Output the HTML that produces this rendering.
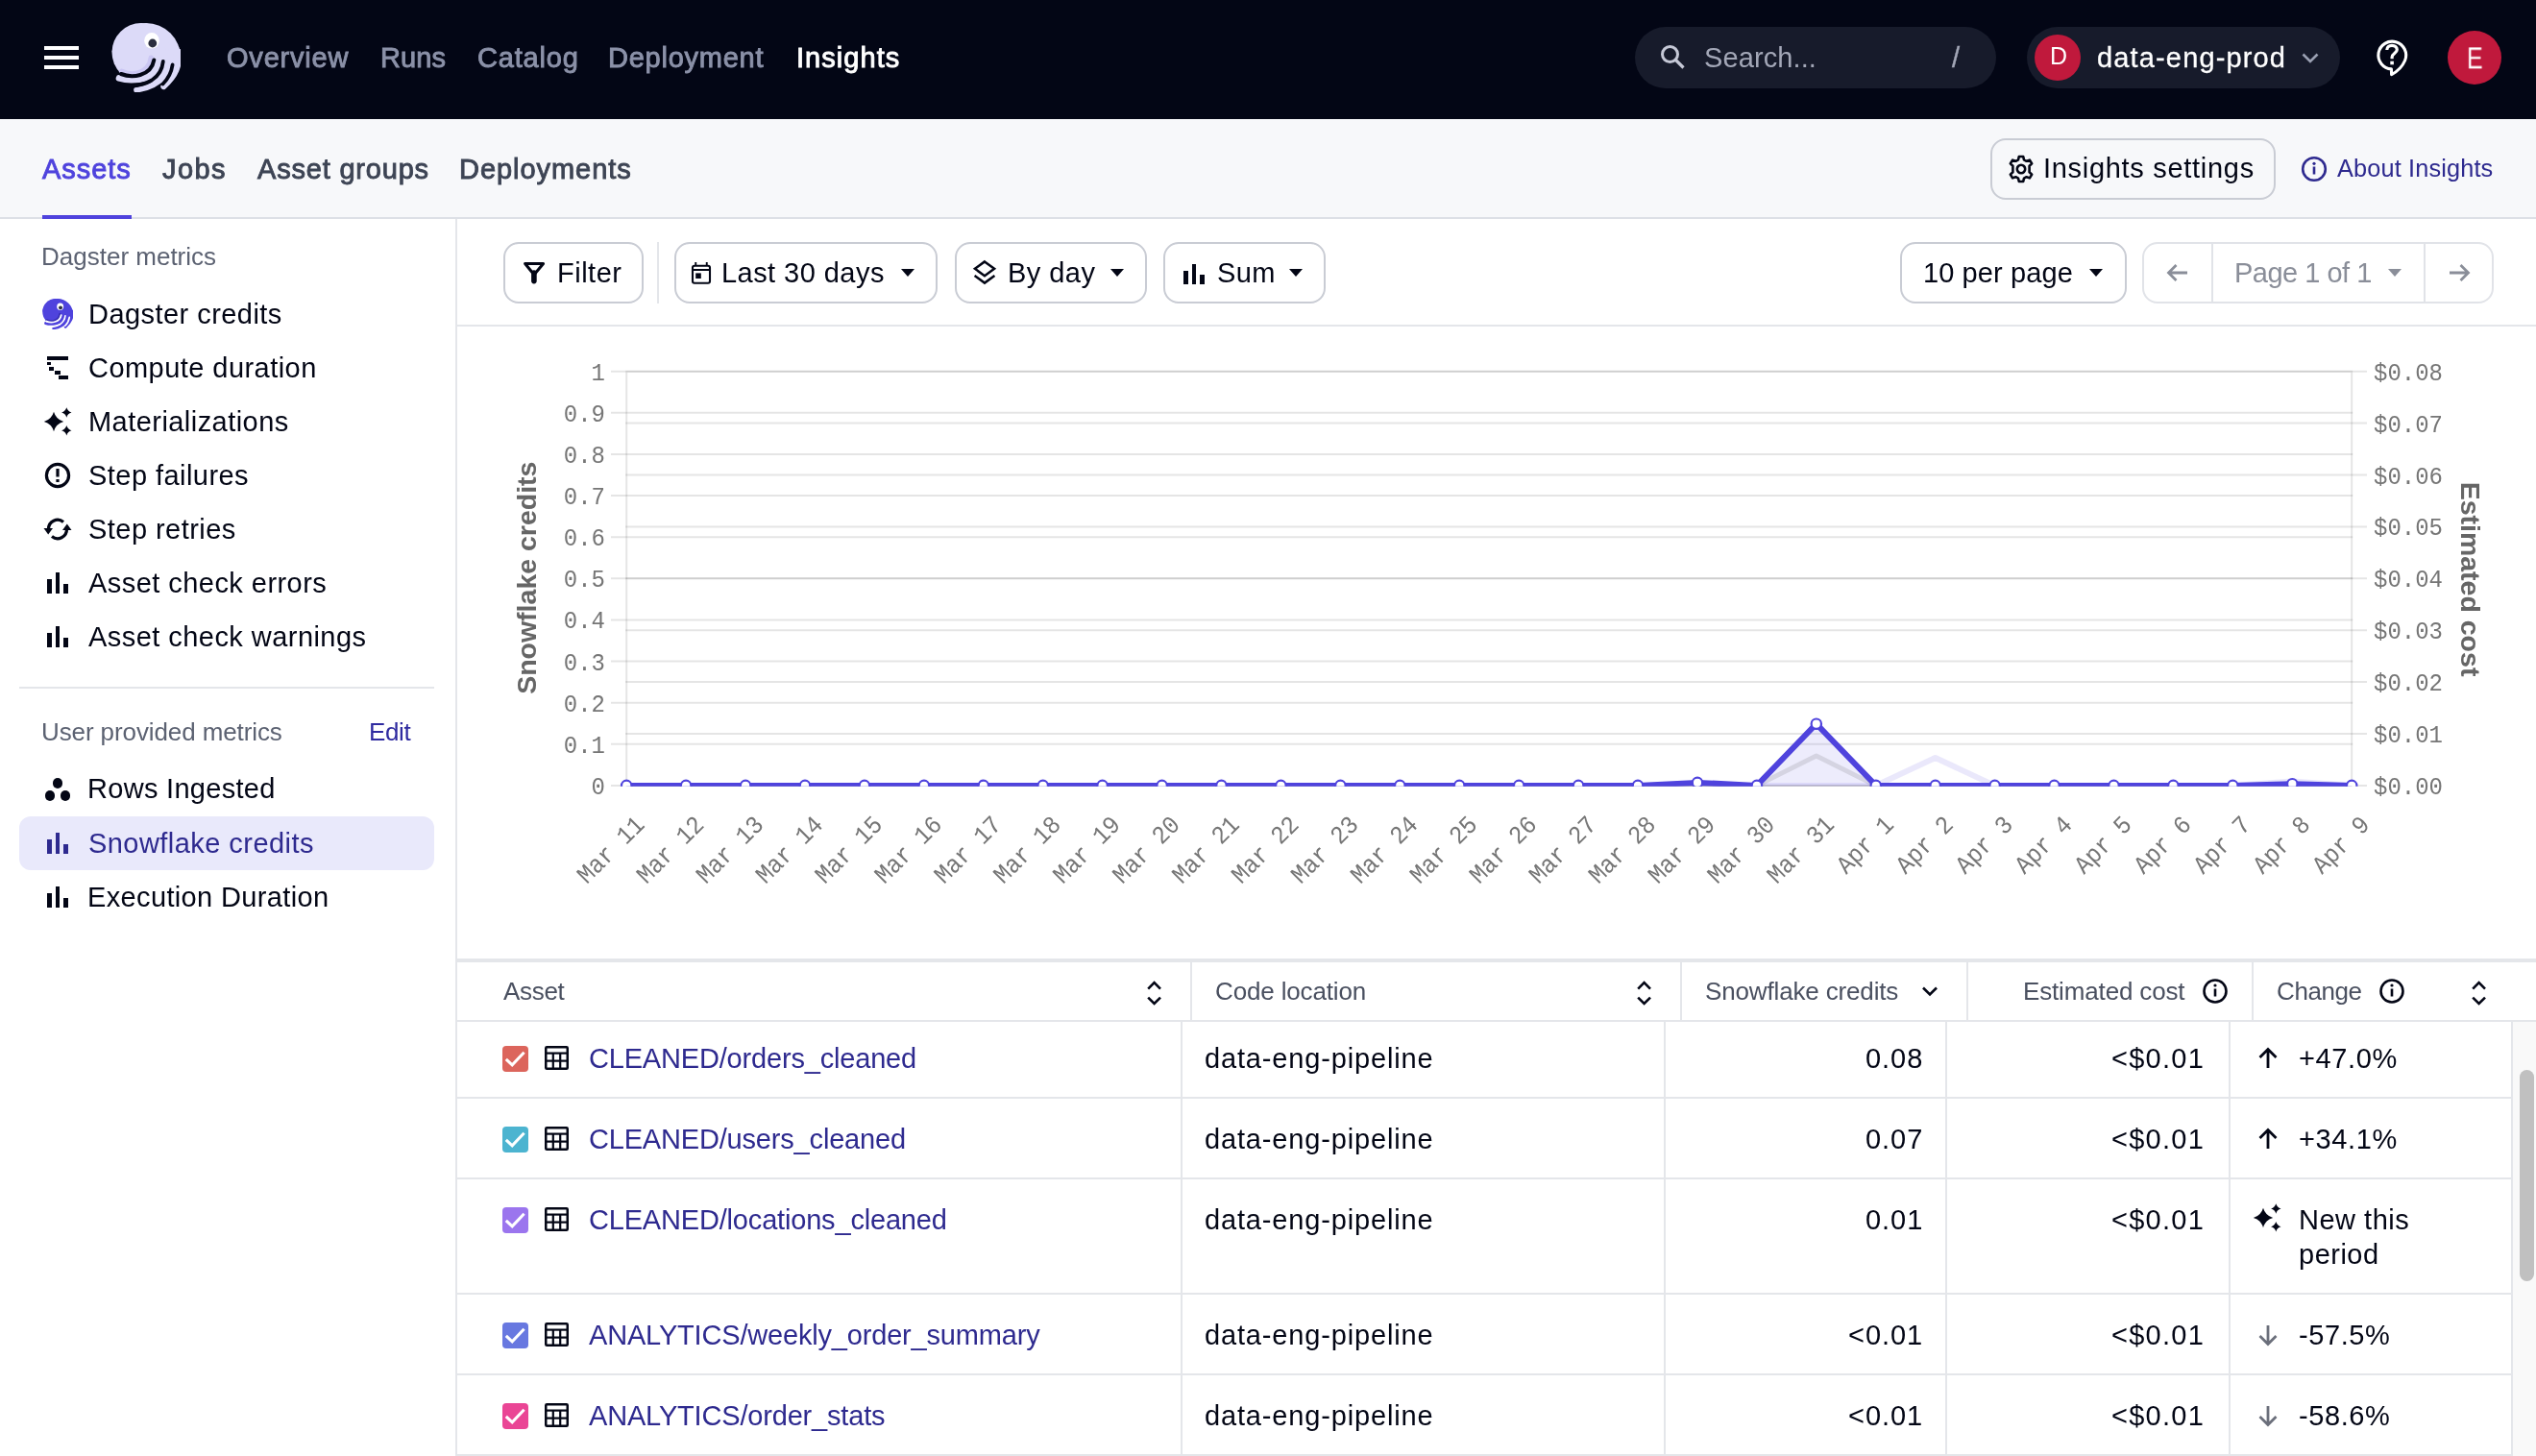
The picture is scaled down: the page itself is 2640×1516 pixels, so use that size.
<!DOCTYPE html>
<html><head><meta charset="utf-8"><title>Insights</title>
<style>
html,body{margin:0;padding:0;width:2640px;height:1516px;overflow:hidden;background:#ffffff;}
body{position:relative;font-family:'Liberation Sans', sans-serif;}
.t{position:absolute;line-height:1;white-space:nowrap;will-change:transform;}
.g{will-change:transform;}
.r{position:absolute;}
</style></head><body>
<div class="r" style="left:0px;top:0px;width:2640px;height:124px;background:#030615;"></div>
<div class="r" style="left:46px;top:48px;width:36px;height:4px;background:#ffffff;"></div>
<div class="r" style="left:46px;top:58px;width:36px;height:4px;background:#ffffff;"></div>
<div class="r" style="left:46px;top:68px;width:36px;height:4px;background:#ffffff;"></div>
<svg class="r" style="left:116px;top:24px" width="72" height="72" viewBox="0 0 72 72"><defs><clipPath id="clipA"><rect x="0" y="0" width="72" height="30"/></clipPath></defs>
<g fill="#dcdaf8">
<circle cx="36" cy="36" r="36" clip-path="url(#clipA)"/>
<circle cx="31" cy="30.5" r="30.5"/>
<path d="M 40 24 L 69.8 24 L 71.5 30 L 72 36 L 71.2 44 L 68.5 50 L 64 56 L 58 61 L 50 62.5 L 44 64 L 40 60 Z"/>
</g>
<g fill="none" stroke-linecap="round">
<path d="M 7.9 57.4 C 16 60 28 59.5 37.8 56.8 C 45 54 50 48 52 40 L 53 28" stroke="#dcdaf8" stroke-width="6.5"/>
<path d="M 26.1 69.6 C 36 68 47 64 53 57 C 58 51 60 46 61 40 L 62 30" stroke="#dcdaf8" stroke-width="5.9"/>
<path d="M 54.3 66.2 C 60 61 65 55 67.5 49 C 70 43 71 38 71 30" stroke="#dcdaf8" stroke-width="5.9"/>
<path d="M 41.2 36 C 40.3 44 35 49.8 27 52 C 21 53.6 15.5 52.6 10.5 50.2" stroke="#cbc7f3" stroke-width="5.2"/>
<path d="M 44.3 38.5 C 43 46 38 51.6 30 54 C 24 55.8 16 55.5 10 53" stroke="#030615" stroke-width="4.1"/>
<path d="M 53.8 40 C 53 48 49 55 42 59.5 C 36 63 29 65 22 65.5" stroke="#030615" stroke-width="3.8"/>
<path d="M 63.6 43.5 C 62.5 51 59.5 57.5 53.5 63.5" stroke="#030615" stroke-width="3.8"/>
</g>
<ellipse cx="42" cy="18.3" rx="7.8" ry="8.3" fill="#ffffff"/>
<circle cx="42.8" cy="21" r="4.4" fill="#2b2e3f"/>
</svg>
<div class="t" style="left:236.0px;top:45.7px;font-size:29px;color:#8b91a8;letter-spacing:0.8px;font-family:'Liberation Sans', sans-serif;font-weight:400;-webkit-text-stroke:0.9px #8b91a8;">Overview</div>
<div class="t" style="left:395.5px;top:45.7px;font-size:29px;color:#8b91a8;letter-spacing:0.1px;font-family:'Liberation Sans', sans-serif;font-weight:400;-webkit-text-stroke:0.9px #8b91a8;">Runs</div>
<div class="t" style="left:497.0px;top:45.7px;font-size:29px;color:#8b91a8;letter-spacing:0.8px;font-family:'Liberation Sans', sans-serif;font-weight:400;-webkit-text-stroke:0.9px #8b91a8;">Catalog</div>
<div class="t" style="left:633.0px;top:45.7px;font-size:29px;color:#8b91a8;letter-spacing:0.75px;font-family:'Liberation Sans', sans-serif;font-weight:400;-webkit-text-stroke:0.9px #8b91a8;">Deployment</div>
<div class="t" style="left:828.5px;top:45.7px;font-size:29px;color:#ffffff;letter-spacing:1.05px;font-family:'Liberation Sans', sans-serif;font-weight:400;-webkit-text-stroke:0.9px #ffffff;">Insights</div>
<div class="r" style="left:1702px;top:28px;width:376px;height:64px;background:#171b2b;border-radius:32px;"></div>
<svg class="r" style="left:1726px;top:45px" width="32" height="32" viewBox="0 0 32 32">
<circle cx="12.5" cy="11.5" r="8" stroke="#c5c8d6" stroke-width="3" fill="none"/>
<path d="M 18.5 17.5 L 26.5 25.5" stroke="#c5c8d6" stroke-width="3.2" fill="none"/>
</svg>
<div class="t" style="left:1774.0px;top:45.5px;font-size:29px;color:#a3a7b7;letter-spacing:0.1px;font-family:'Liberation Sans', sans-serif;font-weight:400;">Search...</div>
<div class="t" style="left:2032.0px;top:45.5px;font-size:29px;color:#a3a7b7;letter-spacing:0px;font-family:'Liberation Sans', sans-serif;font-weight:400;-webkit-text-stroke:0.4px #a3a7b7;">/</div>
<div class="r" style="left:2110px;top:28px;width:326px;height:64px;background:#171b2b;border-radius:32px;"></div>
<div class="r" style="left:2118px;top:36px;width:48px;height:48px;border-radius:24px;background:#c0193c"></div>
<div class="t" style="left:2133.5px;top:46.1px;font-size:25px;color:#ffffff;letter-spacing:0px;font-family:'Liberation Sans', sans-serif;font-weight:400;">D</div>
<div class="t" style="left:2183.0px;top:45.5px;font-size:29px;color:#ffffff;letter-spacing:1.15px;font-family:'Liberation Sans', sans-serif;font-weight:400;-webkit-text-stroke:0.3px #ffffff;">data-eng-prod</div>
<svg class="r" style="left:2393.5px;top:51px" width="22" height="20" viewBox="0 0 22 20">
<path d="M 3.5 5.5 L 11 13 L 18.5 5.5" stroke="#9aa0b2" stroke-width="2.6" fill="none"/>
</svg>
<svg class="r" style="left:2466px;top:34px" width="46" height="50" viewBox="2466 34 46 50">
<path d="M 2503.6 63 A 14.4 14.4 0 1 0 2489.4 71.9 L 2489.6 77.6 Q 2499.5 72.5 2503.6 63 Z" stroke="#ffffff" stroke-width="3.1" fill="none" stroke-linejoin="round"/>
<path d="M 2484.8 52 C 2484.8 48.8 2487.2 47.3 2490 47.3 C 2493 47.3 2495.3 49 2495.3 51.8 C 2495.3 55.3 2490.1 55.8 2490.1 59.5 L 2490.1 61.2" stroke="#ffffff" stroke-width="3.2" fill="none"/>
<rect x="2488.3" y="63.7" width="3.6" height="3.6" fill="#ffffff"/>
</svg>
<div class="r" style="left:2548px;top:31.5px;width:56px;height:56px;border-radius:28px;background:#c0193c"></div>
<div class="t" style="left:2568.0px;top:47.3px;font-size:29px;color:#ffffff;letter-spacing:0px;font-family:'Liberation Sans', sans-serif;font-weight:400;transform:scale(0.86,1.1);transform-origin:0 24.5px;">E</div>
<div class="r" style="left:0px;top:124px;width:2640px;height:103px;background:#f7f8fa;"></div>
<div class="r" style="left:0px;top:226px;width:2640px;height:2px;background:#dde0e6;"></div>
<div class="r" style="left:44px;top:224px;width:93px;height:4px;background:#4f43dd;"></div>
<div class="t" style="left:44.0px;top:161.9px;font-size:29px;color:#4f43dd;letter-spacing:0.95px;font-family:'Liberation Sans', sans-serif;font-weight:400;-webkit-text-stroke:0.9px #4f43dd;">Assets</div>
<div class="t" style="left:169.0px;top:161.9px;font-size:29px;color:#3d4454;letter-spacing:1.4px;font-family:'Liberation Sans', sans-serif;font-weight:400;-webkit-text-stroke:0.9px #3d4454;">Jobs</div>
<div class="t" style="left:268.0px;top:161.9px;font-size:29px;color:#3d4454;letter-spacing:0.8px;font-family:'Liberation Sans', sans-serif;font-weight:400;-webkit-text-stroke:0.9px #3d4454;">Asset groups</div>
<div class="t" style="left:477.5px;top:161.9px;font-size:29px;color:#3d4454;letter-spacing:0.95px;font-family:'Liberation Sans', sans-serif;font-weight:400;-webkit-text-stroke:0.9px #3d4454;">Deployments</div>
<div class="r" style="left:2072px;top:144px;width:297px;height:64px;box-sizing:border-box;border:2px solid #c9ccd4;border-radius:16px;background:#f7f8fa"></div>
<svg class="r" style="left:2088px;top:160px" width="32" height="32" viewBox="0 0 32 32">
<g transform="translate(16 16)">
<path d="M -2.2 -13 L 2.2 -13 L 3 -9.6 L 5.6 -8.2 L 8.9 -9.4 L 11.2 -5.6 L 8.6 -3.3 L 8.6 0 L 8.6 3.3 L 11.2 5.6 L 8.9 9.4 L 5.6 8.2 L 3 9.6 L 2.2 13 L -2.2 13 L -3 9.6 L -5.6 8.2 L -8.9 9.4 L -11.2 5.6 L -8.6 3.3 L -8.6 -3.3 L -11.2 -5.6 L -8.9 -9.4 L -5.6 -8.2 L -3 -9.6 Z" stroke="#030615" stroke-width="2.6" fill="none" stroke-linejoin="round"/>
<circle cx="0" cy="0" r="4.2" stroke="#030615" stroke-width="2.6" fill="none"/>
</g></svg>
<div class="t" style="left:2127.0px;top:161.3px;font-size:29px;color:#030615;letter-spacing:0.7px;font-family:'Liberation Sans', sans-serif;font-weight:400;">Insights settings</div>
<svg class="r" style="left:2393px;top:161px" width="32" height="32" viewBox="0 0 32 32">
<circle cx="16" cy="15" r="11.8" stroke="#2e2a8f" stroke-width="2.6" fill="none"/>
<rect x="14.7" y="12.5" width="2.6" height="8" fill="#2e2a8f"/>
<circle cx="16" cy="9.3" r="1.6" fill="#2e2a8f"/>
</svg>
<div class="t" style="left:2433.0px;top:163.1px;font-size:25.3px;color:#2e2a8f;letter-spacing:0.15px;font-family:'Liberation Sans', sans-serif;font-weight:400;">About Insights</div>
<div class="r" style="left:474px;top:228px;width:2px;height:1288px;background:#e4e6ea;"></div>
<div class="t" style="left:42.5px;top:254.0px;font-size:26px;color:#5c6272;letter-spacing:0px;font-family:'Liberation Sans', sans-serif;font-weight:400;">Dagster metrics</div>
<div class="t" style="left:92.0px;top:312.5px;font-size:29px;color:#030615;letter-spacing:0.45px;font-family:'Liberation Sans', sans-serif;font-weight:400;">Dagster credits</div>
<div class="t" style="left:92.0px;top:368.5px;font-size:29px;color:#030615;letter-spacing:0.45px;font-family:'Liberation Sans', sans-serif;font-weight:400;">Compute duration</div>
<div class="t" style="left:92.0px;top:424.5px;font-size:29px;color:#030615;letter-spacing:0.45px;font-family:'Liberation Sans', sans-serif;font-weight:400;">Materializations</div>
<div class="t" style="left:92.0px;top:480.5px;font-size:29px;color:#030615;letter-spacing:0.45px;font-family:'Liberation Sans', sans-serif;font-weight:400;">Step failures</div>
<div class="t" style="left:92.0px;top:536.5px;font-size:29px;color:#030615;letter-spacing:0.45px;font-family:'Liberation Sans', sans-serif;font-weight:400;">Step retries</div>
<div class="t" style="left:92.0px;top:592.5px;font-size:29px;color:#030615;letter-spacing:0.45px;font-family:'Liberation Sans', sans-serif;font-weight:400;">Asset check errors</div>
<div class="t" style="left:92.0px;top:648.5px;font-size:29px;color:#030615;letter-spacing:0.45px;font-family:'Liberation Sans', sans-serif;font-weight:400;">Asset check warnings</div>
<svg class="r" style="left:44px;top:311px" width="32" height="32" viewBox="0 0 72 72"><defs><clipPath id="clipB"><rect x="0" y="0" width="72" height="30"/></clipPath></defs>
<g fill="#4f43dd">
<circle cx="36" cy="36" r="36" clip-path="url(#clipB)"/>
<circle cx="31" cy="30.5" r="30.5"/>
<path d="M 40 24 L 69.8 24 L 71.5 30 L 72 36 L 71.2 44 L 68.5 50 L 64 56 L 58 61 L 50 62.5 L 44 64 L 40 60 Z"/>
</g>
<g fill="none" stroke-linecap="round">
<path d="M 7.9 57.4 C 16 60 28 59.5 37.8 56.8 C 45 54 50 48 52 40 L 53 28" stroke="#4f43dd" stroke-width="6.5"/>
<path d="M 26.1 69.6 C 36 68 47 64 53 57 C 58 51 60 46 61 40 L 62 30" stroke="#4f43dd" stroke-width="5.9"/>
<path d="M 54.3 66.2 C 60 61 65 55 67.5 49 C 70 43 71 38 71 30" stroke="#4f43dd" stroke-width="5.9"/>
<path d="M 41.2 36 C 40.3 44 35 49.8 27 52 C 21 53.6 15.5 52.6 10.5 50.2" stroke="#3a31b8" stroke-width="5.2"/>
<path d="M 44.3 38.5 C 43 46 38 51.6 30 54 C 24 55.8 16 55.5 10 53" stroke="#ffffff" stroke-width="4.1"/>
<path d="M 53.8 40 C 53 48 49 55 42 59.5 C 36 63 29 65 22 65.5" stroke="#ffffff" stroke-width="3.8"/>
<path d="M 63.6 43.5 C 62.5 51 59.5 57.5 53.5 63.5" stroke="#ffffff" stroke-width="3.8"/>
</g>
<ellipse cx="42" cy="18.3" rx="7.8" ry="8.3" fill="#ffffff"/>
<circle cx="42.8" cy="21" r="4.4" fill="#2b2e3f"/>
</svg>
<div class="r" style="left:49px;top:371px;width:22px;height:4px;background:#030615;"></div>
<div class="r" style="left:49px;top:376.5px;width:4px;height:3.5px;background:#030615;"></div>
<div class="r" style="left:51px;top:382px;width:5px;height:3.5px;background:#030615;"></div>
<div class="r" style="left:57px;top:386px;width:5.5px;height:3.5px;background:#030615;"></div>
<div class="r" style="left:61px;top:391px;width:10px;height:4px;background:#030615;"></div>
<svg class="r" style="left:45px;top:423px" width="32" height="32" viewBox="0 0 32 32"><path d="M 11 5.800000000000001 Q 13.244 13.756 21.2 16 Q 13.244 18.244 11 26.2 Q 8.756 18.244 0.8000000000000007 16 Q 8.756 13.756 11 5.800000000000001 Z" fill="#030615"/><path d="M 24.3 1.2999999999999998 Q 25.444000000000003 5.356 29.5 6.5 Q 25.444000000000003 7.644 24.3 11.7 Q 23.156 7.644 19.1 6.5 Q 23.156 5.356 24.3 1.2999999999999998 Z" fill="#030615"/><path d="M 24.3 20.0 Q 25.444000000000003 24.055999999999997 29.5 25.2 Q 25.444000000000003 26.344 24.3 30.4 Q 23.156 26.344 19.1 25.2 Q 23.156 24.055999999999997 24.3 20.0 Z" fill="#030615"/></svg>
<svg class="r" style="left:44px;top:479px" width="32" height="32" viewBox="0 0 32 32">
<circle cx="16" cy="16" r="11.6" stroke="#030615" stroke-width="3.2" fill="none"/>
<rect x="14.4" y="9" width="3.2" height="8.5" fill="#030615"/>
<rect x="14.4" y="20" width="3.2" height="3" fill="#030615"/>
</svg>
<svg class="r" style="left:44px;top:535px" width="32" height="32" viewBox="0 0 32 32">
<path d="M 6.5 16 A 9.5 9.5 0 0 1 22 8.5" stroke="#030615" stroke-width="3.2" fill="none"/>
<path d="M 25.5 16 A 9.5 9.5 0 0 1 10 23.5" stroke="#030615" stroke-width="3.2" fill="none"/>
<path d="M 1.5 15 L 11 15 L 6.2 21.5 Z" fill="#030615"/>
<path d="M 21 17 L 30.5 17 L 25.8 10.5 Z" fill="#030615"/>
</svg>
<div class="r" style="left:49px;top:603.0px;width:5px;height:14.5px;background:#030615;"></div>
<div class="r" style="left:57.8px;top:596.0px;width:4.6px;height:21.5px;background:#030615;"></div>
<div class="r" style="left:66px;top:608.0px;width:5px;height:9.5px;background:#030615;"></div>
<div class="r" style="left:49px;top:659.0px;width:5px;height:14.5px;background:#030615;"></div>
<div class="r" style="left:57.8px;top:652.0px;width:4.6px;height:21.5px;background:#030615;"></div>
<div class="r" style="left:66px;top:664.0px;width:5px;height:9.5px;background:#030615;"></div>
<div class="r" style="left:20px;top:715px;width:432px;height:2px;background:#e4e6ea;"></div>
<div class="t" style="left:43.0px;top:748.5px;font-size:26px;color:#5c6272;letter-spacing:-0.1px;font-family:'Liberation Sans', sans-serif;font-weight:400;">User provided metrics</div>
<div class="t" style="left:384.0px;top:748.5px;font-size:26px;color:#2f2ba0;letter-spacing:-0.4px;font-family:'Liberation Sans', sans-serif;font-weight:400;">Edit</div>
<div class="r" style="left:54.6px;top:809.8000000000001px;width:10.8px;height:10.8px;border-radius:50%;background:#030615"></div>
<div class="r" style="left:46.6px;top:823.0px;width:10.8px;height:10.8px;border-radius:50%;background:#030615"></div>
<div class="r" style="left:62.50000000000001px;top:823.0px;width:10.8px;height:10.8px;border-radius:50%;background:#030615"></div>
<div class="t" style="left:91.0px;top:807.1px;font-size:29px;color:#030615;letter-spacing:0.3px;font-family:'Liberation Sans', sans-serif;font-weight:400;">Rows Ingested</div>
<div class="r" style="left:20px;top:850px;width:432px;height:56px;background:#e9e9fb;border-radius:12px;"></div>
<div class="r" style="left:49px;top:874.3px;width:5px;height:14.5px;background:#2e2a8f;"></div>
<div class="r" style="left:57.8px;top:867.3px;width:4.6px;height:21.5px;background:#2e2a8f;"></div>
<div class="r" style="left:66px;top:879.3px;width:5px;height:9.5px;background:#2e2a8f;"></div>
<div class="t" style="left:92.0px;top:863.5px;font-size:29px;color:#2e2a8f;letter-spacing:0.45px;font-family:'Liberation Sans', sans-serif;font-weight:400;">Snowflake credits</div>
<div class="r" style="left:49px;top:930.3px;width:5px;height:14.5px;background:#030615;"></div>
<div class="r" style="left:57.8px;top:923.3px;width:4.6px;height:21.5px;background:#030615;"></div>
<div class="r" style="left:66px;top:935.3px;width:5px;height:9.5px;background:#030615;"></div>
<div class="t" style="left:91.0px;top:920.0px;font-size:29px;color:#030615;letter-spacing:0.36px;font-family:'Liberation Sans', sans-serif;font-weight:400;">Execution Duration</div>
<div class="r" style="left:476px;top:338px;width:2164px;height:2px;background:#e4e6ea;"></div>
<div class="r" style="left:524px;top:252px;width:146px;height:64px;box-sizing:border-box;border:2px solid #c9ccd4;border-radius:16px;background:#fff"></div>
<svg class="r" style="left:540px;top:268px" width="32" height="32" viewBox="540 268 32 32">
<path d="M 546.6 274.5 L 565.6 274.5 L 556 286 Z" stroke="#030615" stroke-width="3" fill="none" stroke-linejoin="round"/>
<path d="M 555.9 284 L 555.9 292.6" stroke="#030615" stroke-width="5.6" stroke-linecap="round" fill="none"/>
</svg>
<div class="t" style="left:580.0px;top:270.0px;font-size:29px;color:#030615;letter-spacing:0.5px;font-family:'Liberation Sans', sans-serif;font-weight:400;">Filter</div>
<div class="r" style="left:684px;top:252px;width:2px;height:64px;background:#e4e6ea;"></div>
<div class="r" style="left:702px;top:252px;width:274px;height:64px;box-sizing:border-box;border:2px solid #c9ccd4;border-radius:16px;background:#fff"></div>
<svg class="r" style="left:716px;top:270px" width="28" height="30" viewBox="716 270 28 30">
<rect x="721" y="276.7" width="18" height="18" rx="2" stroke="#030615" stroke-width="2.1" fill="none"/>
<rect x="721" y="280" width="18" height="2" fill="#030615"/>
<rect x="723.3" y="273" width="1.9" height="4" fill="#030615"/>
<rect x="734.8" y="273" width="1.9" height="4" fill="#030615"/>
<rect x="724.2" y="284.4" width="5.6" height="5.6" fill="#030615"/>
</svg>
<div class="t" style="left:751.0px;top:270.0px;font-size:29px;color:#030615;letter-spacing:0.45px;font-family:'Liberation Sans', sans-serif;font-weight:400;">Last 30 days</div>
<svg class="r" style="left:938px;top:280px" width="14" height="9" viewBox="0 0 14 9"><path d="M 0 0 L 14 0 L 7 8 Z" fill="#030615"/></svg>
<div class="r" style="left:994px;top:252px;width:200px;height:64px;box-sizing:border-box;border:2px solid #c9ccd4;border-radius:16px;background:#fff"></div>
<svg class="r" style="left:1008px;top:266px" width="34" height="34" viewBox="1008 266 34 34">
<path d="M 1025 272.4 L 1035.1 279.8 L 1025 287.2 L 1014.9 279.8 Z" stroke="#030615" stroke-width="2.5" fill="none" stroke-linejoin="miter"/>
<path d="M 1014.6 287 L 1025 294.6 L 1035.4 287" stroke="#030615" stroke-width="2.5" fill="none"/>
</svg>
<div class="t" style="left:1049.0px;top:270.0px;font-size:29px;color:#030615;letter-spacing:0.45px;font-family:'Liberation Sans', sans-serif;font-weight:400;">By day</div>
<svg class="r" style="left:1156px;top:280px" width="14" height="9" viewBox="0 0 14 9"><path d="M 0 0 L 14 0 L 7 8 Z" fill="#030615"/></svg>
<div class="r" style="left:1211px;top:252px;width:169px;height:64px;box-sizing:border-box;border:2px solid #c9ccd4;border-radius:16px;background:#fff"></div>
<div class="r" style="left:1232px;top:282px;width:5px;height:14px;background:#030615;"></div>
<div class="r" style="left:1240.5px;top:275px;width:4.6px;height:21px;background:#030615;"></div>
<div class="r" style="left:1248.7px;top:286px;width:5px;height:10px;background:#030615;"></div>
<div class="t" style="left:1267.0px;top:270.0px;font-size:29px;color:#030615;letter-spacing:0.45px;font-family:'Liberation Sans', sans-serif;font-weight:400;">Sum</div>
<svg class="r" style="left:1342px;top:280px" width="14" height="9" viewBox="0 0 14 9"><path d="M 0 0 L 14 0 L 7 8 Z" fill="#030615"/></svg>
<div class="r" style="left:1978px;top:252px;width:236px;height:64px;box-sizing:border-box;border:2px solid #c9ccd4;border-radius:16px;background:#fff"></div>
<div class="t" style="left:2001.5px;top:270.0px;font-size:29px;color:#030615;letter-spacing:0.1px;font-family:'Liberation Sans', sans-serif;font-weight:400;">10 per page</div>
<svg class="r" style="left:2175px;top:280px" width="14" height="9" viewBox="0 0 14 9"><path d="M 0 0 L 14 0 L 7 8 Z" fill="#030615"/></svg>
<div class="r" style="left:2230px;top:252px;width:366px;height:64px;box-sizing:border-box;border:2px solid #e1e3e8;border-radius:16px;background:#fff"></div>
<div class="r" style="left:2302px;top:254px;width:2px;height:60px;background:#e1e3e8;"></div>
<div class="r" style="left:2523px;top:254px;width:2px;height:60px;background:#e1e3e8;"></div>
<svg class="r" style="left:2254px;top:272px" width="26" height="24" viewBox="0 0 26 24">
<path d="M 23 12 L 4 12 M 11.5 4 L 3.5 12 L 11.5 20" stroke="#8a8e99" stroke-width="2.8" fill="none"/>
</svg>
<div class="t" style="left:2326.0px;top:270.0px;font-size:29px;color:#8a8e99;letter-spacing:-0.5px;font-family:'Liberation Sans', sans-serif;font-weight:400;">Page 1 of 1</div>
<svg class="r" style="left:2486px;top:280px" width="14" height="9" viewBox="0 0 14 9"><path d="M 0 0 L 14 0 L 7 8 Z" fill="#8a8e99"/></svg>
<svg class="r" style="left:2547px;top:272px" width="26" height="24" viewBox="0 0 26 24">
<path d="M 3 12 L 22 12 M 14.5 4 L 22.5 12 L 14.5 20" stroke="#8a8e99" stroke-width="2.8" fill="none"/>
</svg>
<svg class="r g" style="left:0;top:0" width="2640" height="1000" viewBox="0 0 2640 1000">
<defs><clipPath id="plotclip"><rect x="600" y="300" width="1900" height="518.7"/></clipPath></defs>
<line x1="636" y1="386.70" x2="2449.2" y2="386.70" stroke="rgba(0,0,0,0.1)" stroke-width="2"/>
<line x1="636" y1="429.82" x2="2449.2" y2="429.82" stroke="rgba(0,0,0,0.1)" stroke-width="2"/>
<line x1="636" y1="472.94" x2="2449.2" y2="472.94" stroke="rgba(0,0,0,0.1)" stroke-width="2"/>
<line x1="636" y1="516.06" x2="2449.2" y2="516.06" stroke="rgba(0,0,0,0.1)" stroke-width="2"/>
<line x1="636" y1="559.18" x2="2449.2" y2="559.18" stroke="rgba(0,0,0,0.1)" stroke-width="2"/>
<line x1="636" y1="602.30" x2="2449.2" y2="602.30" stroke="rgba(0,0,0,0.1)" stroke-width="2"/>
<line x1="636" y1="645.42" x2="2449.2" y2="645.42" stroke="rgba(0,0,0,0.1)" stroke-width="2"/>
<line x1="636" y1="688.54" x2="2449.2" y2="688.54" stroke="rgba(0,0,0,0.1)" stroke-width="2"/>
<line x1="636" y1="731.66" x2="2449.2" y2="731.66" stroke="rgba(0,0,0,0.1)" stroke-width="2"/>
<line x1="636" y1="774.78" x2="2449.2" y2="774.78" stroke="rgba(0,0,0,0.1)" stroke-width="2"/>
<line x1="636" y1="817.90" x2="2449.2" y2="817.90" stroke="rgba(0,0,0,0.1)" stroke-width="2"/>
<line x1="651.2" y1="386.70" x2="2464" y2="386.70" stroke="rgba(0,0,0,0.1)" stroke-width="2"/>
<line x1="651.2" y1="440.60" x2="2464" y2="440.60" stroke="rgba(0,0,0,0.1)" stroke-width="2"/>
<line x1="651.2" y1="494.50" x2="2464" y2="494.50" stroke="rgba(0,0,0,0.1)" stroke-width="2"/>
<line x1="651.2" y1="548.40" x2="2464" y2="548.40" stroke="rgba(0,0,0,0.1)" stroke-width="2"/>
<line x1="651.2" y1="602.30" x2="2464" y2="602.30" stroke="rgba(0,0,0,0.1)" stroke-width="2"/>
<line x1="651.2" y1="656.20" x2="2464" y2="656.20" stroke="rgba(0,0,0,0.1)" stroke-width="2"/>
<line x1="651.2" y1="710.10" x2="2464" y2="710.10" stroke="rgba(0,0,0,0.1)" stroke-width="2"/>
<line x1="651.2" y1="764.00" x2="2464" y2="764.00" stroke="rgba(0,0,0,0.1)" stroke-width="2"/>
<line x1="651.2" y1="817.90" x2="2464" y2="817.90" stroke="rgba(0,0,0,0.1)" stroke-width="2"/>
<line x1="652.2" y1="387.7" x2="652.2" y2="816.9" stroke="rgba(0,0,0,0.1)" stroke-width="2"/>
<line x1="2448.2" y1="387.7" x2="2448.2" y2="816.9" stroke="rgba(0,0,0,0.1)" stroke-width="2"/>
<text transform="translate(630 395.7) scale(1 1.1)" text-anchor="end" font-family="Liberation Mono" font-size="24" fill="#767676">1</text>
<text transform="translate(630 438.8) scale(1 1.1)" text-anchor="end" font-family="Liberation Mono" font-size="24" fill="#767676">0.9</text>
<text transform="translate(630 481.9) scale(1 1.1)" text-anchor="end" font-family="Liberation Mono" font-size="24" fill="#767676">0.8</text>
<text transform="translate(630 525.1) scale(1 1.1)" text-anchor="end" font-family="Liberation Mono" font-size="24" fill="#767676">0.7</text>
<text transform="translate(630 568.2) scale(1 1.1)" text-anchor="end" font-family="Liberation Mono" font-size="24" fill="#767676">0.6</text>
<text transform="translate(630 611.3) scale(1 1.1)" text-anchor="end" font-family="Liberation Mono" font-size="24" fill="#767676">0.5</text>
<text transform="translate(630 654.4) scale(1 1.1)" text-anchor="end" font-family="Liberation Mono" font-size="24" fill="#767676">0.4</text>
<text transform="translate(630 697.5) scale(1 1.1)" text-anchor="end" font-family="Liberation Mono" font-size="24" fill="#767676">0.3</text>
<text transform="translate(630 740.7) scale(1 1.1)" text-anchor="end" font-family="Liberation Mono" font-size="24" fill="#767676">0.2</text>
<text transform="translate(630 783.8) scale(1 1.1)" text-anchor="end" font-family="Liberation Mono" font-size="24" fill="#767676">0.1</text>
<text transform="translate(630 826.9) scale(1 1.1)" text-anchor="end" font-family="Liberation Mono" font-size="24" fill="#767676">0</text>
<text transform="translate(2471 395.7) scale(1 1.1)" font-family="Liberation Mono" font-size="24" fill="#767676">$0.08</text>
<text transform="translate(2471 449.6) scale(1 1.1)" font-family="Liberation Mono" font-size="24" fill="#767676">$0.07</text>
<text transform="translate(2471 503.5) scale(1 1.1)" font-family="Liberation Mono" font-size="24" fill="#767676">$0.06</text>
<text transform="translate(2471 557.4) scale(1 1.1)" font-family="Liberation Mono" font-size="24" fill="#767676">$0.05</text>
<text transform="translate(2471 611.3) scale(1 1.1)" font-family="Liberation Mono" font-size="24" fill="#767676">$0.04</text>
<text transform="translate(2471 665.2) scale(1 1.1)" font-family="Liberation Mono" font-size="24" fill="#767676">$0.03</text>
<text transform="translate(2471 719.1) scale(1 1.1)" font-family="Liberation Mono" font-size="24" fill="#767676">$0.02</text>
<text transform="translate(2471 773.0) scale(1 1.1)" font-family="Liberation Mono" font-size="24" fill="#767676">$0.01</text>
<text transform="translate(2471 826.9) scale(1 1.1)" font-family="Liberation Mono" font-size="24" fill="#767676">$0.00</text>
<text transform="translate(558 601.7) rotate(-90)" text-anchor="middle" font-family="Liberation Sans" font-weight="700" font-size="28.5" fill="#666666">Snowflake credits</text>
<text transform="translate(2562 603) rotate(90)" text-anchor="middle" font-family="Liberation Sans" font-weight="700" font-size="28.5" fill="#666666">Estimated cost</text>
<text transform="translate(672.2 860) rotate(-45) scale(1 1.1)" text-anchor="end" font-family="Liberation Mono" font-size="24" fill="#767676">Mar 11</text>
<text transform="translate(734.1 860) rotate(-45) scale(1 1.1)" text-anchor="end" font-family="Liberation Mono" font-size="24" fill="#767676">Mar 12</text>
<text transform="translate(796.1 860) rotate(-45) scale(1 1.1)" text-anchor="end" font-family="Liberation Mono" font-size="24" fill="#767676">Mar 13</text>
<text transform="translate(858.0 860) rotate(-45) scale(1 1.1)" text-anchor="end" font-family="Liberation Mono" font-size="24" fill="#767676">Mar 14</text>
<text transform="translate(919.9 860) rotate(-45) scale(1 1.1)" text-anchor="end" font-family="Liberation Mono" font-size="24" fill="#767676">Mar 15</text>
<text transform="translate(981.9 860) rotate(-45) scale(1 1.1)" text-anchor="end" font-family="Liberation Mono" font-size="24" fill="#767676">Mar 16</text>
<text transform="translate(1043.8 860) rotate(-45) scale(1 1.1)" text-anchor="end" font-family="Liberation Mono" font-size="24" fill="#767676">Mar 17</text>
<text transform="translate(1105.7 860) rotate(-45) scale(1 1.1)" text-anchor="end" font-family="Liberation Mono" font-size="24" fill="#767676">Mar 18</text>
<text transform="translate(1167.6 860) rotate(-45) scale(1 1.1)" text-anchor="end" font-family="Liberation Mono" font-size="24" fill="#767676">Mar 19</text>
<text transform="translate(1229.6 860) rotate(-45) scale(1 1.1)" text-anchor="end" font-family="Liberation Mono" font-size="24" fill="#767676">Mar 20</text>
<text transform="translate(1291.5 860) rotate(-45) scale(1 1.1)" text-anchor="end" font-family="Liberation Mono" font-size="24" fill="#767676">Mar 21</text>
<text transform="translate(1353.4 860) rotate(-45) scale(1 1.1)" text-anchor="end" font-family="Liberation Mono" font-size="24" fill="#767676">Mar 22</text>
<text transform="translate(1415.4 860) rotate(-45) scale(1 1.1)" text-anchor="end" font-family="Liberation Mono" font-size="24" fill="#767676">Mar 23</text>
<text transform="translate(1477.3 860) rotate(-45) scale(1 1.1)" text-anchor="end" font-family="Liberation Mono" font-size="24" fill="#767676">Mar 24</text>
<text transform="translate(1539.2 860) rotate(-45) scale(1 1.1)" text-anchor="end" font-family="Liberation Mono" font-size="24" fill="#767676">Mar 25</text>
<text transform="translate(1601.2 860) rotate(-45) scale(1 1.1)" text-anchor="end" font-family="Liberation Mono" font-size="24" fill="#767676">Mar 26</text>
<text transform="translate(1663.1 860) rotate(-45) scale(1 1.1)" text-anchor="end" font-family="Liberation Mono" font-size="24" fill="#767676">Mar 27</text>
<text transform="translate(1725.0 860) rotate(-45) scale(1 1.1)" text-anchor="end" font-family="Liberation Mono" font-size="24" fill="#767676">Mar 28</text>
<text transform="translate(1787.0 860) rotate(-45) scale(1 1.1)" text-anchor="end" font-family="Liberation Mono" font-size="24" fill="#767676">Mar 29</text>
<text transform="translate(1848.9 860) rotate(-45) scale(1 1.1)" text-anchor="end" font-family="Liberation Mono" font-size="24" fill="#767676">Mar 30</text>
<text transform="translate(1910.8 860) rotate(-45) scale(1 1.1)" text-anchor="end" font-family="Liberation Mono" font-size="24" fill="#767676">Mar 31</text>
<text transform="translate(1972.8 860) rotate(-45) scale(1 1.1)" text-anchor="end" font-family="Liberation Mono" font-size="24" fill="#767676">Apr 1</text>
<text transform="translate(2034.7 860) rotate(-45) scale(1 1.1)" text-anchor="end" font-family="Liberation Mono" font-size="24" fill="#767676">Apr 2</text>
<text transform="translate(2096.6 860) rotate(-45) scale(1 1.1)" text-anchor="end" font-family="Liberation Mono" font-size="24" fill="#767676">Apr 3</text>
<text transform="translate(2158.5 860) rotate(-45) scale(1 1.1)" text-anchor="end" font-family="Liberation Mono" font-size="24" fill="#767676">Apr 4</text>
<text transform="translate(2220.5 860) rotate(-45) scale(1 1.1)" text-anchor="end" font-family="Liberation Mono" font-size="24" fill="#767676">Apr 5</text>
<text transform="translate(2282.4 860) rotate(-45) scale(1 1.1)" text-anchor="end" font-family="Liberation Mono" font-size="24" fill="#767676">Apr 6</text>
<text transform="translate(2344.3 860) rotate(-45) scale(1 1.1)" text-anchor="end" font-family="Liberation Mono" font-size="24" fill="#767676">Apr 7</text>
<text transform="translate(2406.3 860) rotate(-45) scale(1 1.1)" text-anchor="end" font-family="Liberation Mono" font-size="24" fill="#767676">Apr 8</text>
<text transform="translate(2468.2 860) rotate(-45) scale(1 1.1)" text-anchor="end" font-family="Liberation Mono" font-size="24" fill="#767676">Apr 9</text>
<g clip-path="url(#plotclip)">
<polygon points="1828.9,817.9 1890.8,753.7 1952.8,817.9" fill="#4f43dd" fill-opacity="0.1"/>
<polyline points="652.2,817.9 714.1,817.9 776.1,817.9 838.0,817.9 899.9,817.9 961.9,817.9 1023.8,817.9 1085.7,817.9 1147.6,817.9 1209.6,817.9 1271.5,817.9 1333.4,817.9 1395.4,817.9 1457.3,817.9 1519.2,817.9 1581.2,817.9 1643.1,817.9 1705.0,817.9 1767.0,817.9 1828.9,817.9 1890.8,817.9 1952.8,817.9 2014.7,789.0 2076.6,817.9 2138.5,817.9 2200.5,817.9 2262.4,817.9 2324.3,817.9 2386.3,813.6 2448.2,817.9" stroke="#4f43dd" stroke-opacity="0.12" stroke-width="6" fill="none" stroke-linejoin="round"/>
<polyline points="652.2,817.9 714.1,817.9 776.1,817.9 838.0,817.9 899.9,817.9 961.9,817.9 1023.8,817.9 1085.7,817.9 1147.6,817.9 1209.6,817.9 1271.5,817.9 1333.4,817.9 1395.4,817.9 1457.3,817.9 1519.2,817.9 1581.2,817.9 1643.1,817.9 1705.0,817.9 1767.0,817.9 1828.9,817.9 1890.8,786.9 1952.8,817.9 2014.7,817.9 2076.6,817.9 2138.5,817.9 2200.5,817.9 2262.4,817.9 2324.3,817.9 2386.3,817.9 2448.2,817.9" stroke="#000" stroke-opacity="0.1" stroke-width="5" fill="none" stroke-linejoin="round"/>
<polyline points="652.2,817.9 714.1,817.9 776.1,817.9 838.0,817.9 899.9,817.9 961.9,817.9 1023.8,817.9 1085.7,817.9 1147.6,817.9 1209.6,817.9 1271.5,817.9 1333.4,817.9 1395.4,817.9 1457.3,817.9 1519.2,817.9 1581.2,817.9 1643.1,817.9 1705.0,817.9 1767.0,814.9 1828.9,817.9 1890.8,753.7 1952.8,817.9 2014.7,817.9 2076.6,817.9 2138.5,817.9 2200.5,817.9 2262.4,817.9 2324.3,817.9 2386.3,816.2 2448.2,817.9" stroke="#4f43dd" stroke-width="6" fill="none" stroke-linejoin="round"/>
<circle cx="652.2" cy="817.9" r="5.2" fill="#fff" stroke="#4f43dd" stroke-width="2.2"/>
<circle cx="714.1" cy="817.9" r="5.2" fill="#fff" stroke="#4f43dd" stroke-width="2.2"/>
<circle cx="776.1" cy="817.9" r="5.2" fill="#fff" stroke="#4f43dd" stroke-width="2.2"/>
<circle cx="838.0" cy="817.9" r="5.2" fill="#fff" stroke="#4f43dd" stroke-width="2.2"/>
<circle cx="899.9" cy="817.9" r="5.2" fill="#fff" stroke="#4f43dd" stroke-width="2.2"/>
<circle cx="961.9" cy="817.9" r="5.2" fill="#fff" stroke="#4f43dd" stroke-width="2.2"/>
<circle cx="1023.8" cy="817.9" r="5.2" fill="#fff" stroke="#4f43dd" stroke-width="2.2"/>
<circle cx="1085.7" cy="817.9" r="5.2" fill="#fff" stroke="#4f43dd" stroke-width="2.2"/>
<circle cx="1147.6" cy="817.9" r="5.2" fill="#fff" stroke="#4f43dd" stroke-width="2.2"/>
<circle cx="1209.6" cy="817.9" r="5.2" fill="#fff" stroke="#4f43dd" stroke-width="2.2"/>
<circle cx="1271.5" cy="817.9" r="5.2" fill="#fff" stroke="#4f43dd" stroke-width="2.2"/>
<circle cx="1333.4" cy="817.9" r="5.2" fill="#fff" stroke="#4f43dd" stroke-width="2.2"/>
<circle cx="1395.4" cy="817.9" r="5.2" fill="#fff" stroke="#4f43dd" stroke-width="2.2"/>
<circle cx="1457.3" cy="817.9" r="5.2" fill="#fff" stroke="#4f43dd" stroke-width="2.2"/>
<circle cx="1519.2" cy="817.9" r="5.2" fill="#fff" stroke="#4f43dd" stroke-width="2.2"/>
<circle cx="1581.2" cy="817.9" r="5.2" fill="#fff" stroke="#4f43dd" stroke-width="2.2"/>
<circle cx="1643.1" cy="817.9" r="5.2" fill="#fff" stroke="#4f43dd" stroke-width="2.2"/>
<circle cx="1705.0" cy="817.9" r="5.2" fill="#fff" stroke="#4f43dd" stroke-width="2.2"/>
<circle cx="1767.0" cy="814.9" r="5.2" fill="#fff" stroke="#4f43dd" stroke-width="2.2"/>
<circle cx="1828.9" cy="817.9" r="5.2" fill="#fff" stroke="#4f43dd" stroke-width="2.2"/>
<circle cx="1890.8" cy="753.7" r="5.2" fill="#fff" stroke="#4f43dd" stroke-width="2.2"/>
<circle cx="1952.8" cy="817.9" r="5.2" fill="#fff" stroke="#4f43dd" stroke-width="2.2"/>
<circle cx="2014.7" cy="817.9" r="5.2" fill="#fff" stroke="#4f43dd" stroke-width="2.2"/>
<circle cx="2076.6" cy="817.9" r="5.2" fill="#fff" stroke="#4f43dd" stroke-width="2.2"/>
<circle cx="2138.5" cy="817.9" r="5.2" fill="#fff" stroke="#4f43dd" stroke-width="2.2"/>
<circle cx="2200.5" cy="817.9" r="5.2" fill="#fff" stroke="#4f43dd" stroke-width="2.2"/>
<circle cx="2262.4" cy="817.9" r="5.2" fill="#fff" stroke="#4f43dd" stroke-width="2.2"/>
<circle cx="2324.3" cy="817.9" r="5.2" fill="#fff" stroke="#4f43dd" stroke-width="2.2"/>
<circle cx="2386.3" cy="816.2" r="5.2" fill="#fff" stroke="#4f43dd" stroke-width="2.2"/>
<circle cx="2448.2" cy="817.9" r="5.2" fill="#fff" stroke="#4f43dd" stroke-width="2.2"/>
</g>
</svg>
<div class="r" style="left:476px;top:998px;width:2164px;height:4px;background:#e4e6ea;"></div>
<div class="r" style="left:476px;top:1062px;width:2164px;height:2px;background:#e4e6ea;"></div>
<div class="r" style="left:1239px;top:1002px;width:2px;height:60px;background:#e4e6ea;"></div>
<div class="r" style="left:1749px;top:1002px;width:2px;height:60px;background:#e4e6ea;"></div>
<div class="r" style="left:2047px;top:1002px;width:2px;height:60px;background:#e4e6ea;"></div>
<div class="r" style="left:2344px;top:1002px;width:2px;height:60px;background:#e4e6ea;"></div>
<div class="t" style="left:524.0px;top:1018.5px;font-size:26px;color:#4a5060;letter-spacing:-0.3px;font-family:'Liberation Sans', sans-serif;font-weight:400;">Asset</div>
<svg class="r" style="left:1193px;top:1020.5px" width="18" height="28" viewBox="0 0 18 28"><path d="M 2.2 8.6 L 8.6 2.2 L 15 8.6 M 2.2 17.6 L 8.6 24 L 15 17.6" stroke="#030615" stroke-width="2.6" fill="none"/></svg>
<div class="t" style="left:1265.0px;top:1018.5px;font-size:26px;color:#4a5060;letter-spacing:-0.15px;font-family:'Liberation Sans', sans-serif;font-weight:400;">Code location</div>
<svg class="r" style="left:1703px;top:1020.5px" width="18" height="28" viewBox="0 0 18 28"><path d="M 2.2 8.6 L 8.6 2.2 L 15 8.6 M 2.2 17.6 L 8.6 24 L 15 17.6" stroke="#030615" stroke-width="2.6" fill="none"/></svg>
<div class="t" style="left:1775.0px;top:1018.5px;font-size:26px;color:#4a5060;letter-spacing:-0.15px;font-family:'Liberation Sans', sans-serif;font-weight:400;">Snowflake credits</div>
<svg class="r" style="left:1999px;top:1023.5px" width="20" height="18" viewBox="0 0 20 18"><path d="M 3 4.5 L 10 11.5 L 17 4.5" stroke="#030615" stroke-width="2.6" fill="none"/></svg>
<div class="t" style="left:2105.5px;top:1018.5px;font-size:26px;color:#4a5060;letter-spacing:-0.15px;font-family:'Liberation Sans', sans-serif;font-weight:400;">Estimated cost</div>
<svg class="r" style="left:2292px;top:1018px" width="28" height="28" viewBox="0 0 28 28">
<circle cx="14" cy="14" r="11.5" stroke="#030615" stroke-width="2.6" fill="none"/>
<rect x="12.7" y="11.5" width="2.6" height="8" fill="#030615"/>
<circle cx="14" cy="8" r="1.6" fill="#030615"/></svg>
<div class="t" style="left:2370.0px;top:1018.5px;font-size:26px;color:#4a5060;letter-spacing:-0.4px;font-family:'Liberation Sans', sans-serif;font-weight:400;">Change</div>
<svg class="r" style="left:2476px;top:1018px" width="28" height="28" viewBox="0 0 28 28">
<circle cx="14" cy="14" r="11.5" stroke="#030615" stroke-width="2.6" fill="none"/>
<rect x="12.7" y="11.5" width="2.6" height="8" fill="#030615"/>
<circle cx="14" cy="8" r="1.6" fill="#030615"/></svg>
<svg class="r" style="left:2571.5px;top:1020.5px" width="18" height="28" viewBox="0 0 18 28"><path d="M 2.2 8.6 L 8.6 2.2 L 15 8.6 M 2.2 17.6 L 8.6 24 L 15 17.6" stroke="#030615" stroke-width="2.6" fill="none"/></svg>
<div class="r" style="left:1229px;top:1064px;width:2px;height:452px;background:#e4e6ea;"></div>
<div class="r" style="left:1732px;top:1064px;width:2px;height:452px;background:#e4e6ea;"></div>
<div class="r" style="left:2025px;top:1064px;width:2px;height:452px;background:#e4e6ea;"></div>
<div class="r" style="left:2320px;top:1064px;width:2px;height:452px;background:#e4e6ea;"></div>
<div class="r" style="left:2614px;top:1064px;width:2px;height:452px;background:#e4e6ea;"></div>
<div class="r" style="left:476px;top:1142px;width:2138px;height:2px;background:#e4e6ea;"></div>
<svg class="r" style="left:522.6px;top:1088.6px" width="27" height="27" viewBox="0 0 27 27"><rect x="0" y="0" width="27" height="27" rx="4" fill="#dc655c"/><path d="M 3.8 13.8 L 10.2 19.9 L 22.6 6.8" stroke="#fff" stroke-width="3.1" fill="none"/></svg>
<svg class="r" style="left:567px;top:1089.0px" width="25" height="25" viewBox="0 0 25 25">
<rect x="1.25" y="1.25" width="22.5" height="22.5" rx="1" stroke="#030615" stroke-width="2.5" fill="none"/>
<line x1="1" y1="7.6" x2="24" y2="7.6" stroke="#030615" stroke-width="2.2"/>
<line x1="1" y1="15.6" x2="24" y2="15.6" stroke="#030615" stroke-width="2.2"/>
<line x1="8.8" y1="7" x2="8.8" y2="24" stroke="#030615" stroke-width="2.2"/>
<line x1="16.2" y1="7" x2="16.2" y2="24" stroke="#030615" stroke-width="2.2"/>
</svg>
<div class="t" style="left:612.5px;top:1087.8px;font-size:29px;color:#2e2a8f;letter-spacing:-0.18px;font-family:'Liberation Sans', sans-serif;font-weight:400;">CLEANED/orders_cleaned</div>
<div class="t" style="left:1254.0px;top:1087.8px;font-size:29px;color:#030615;letter-spacing:0.85px;font-family:'Liberation Sans', sans-serif;font-weight:400;">data-eng-pipeline</div>
<div class="t" style="right:637.5px;top:1087.8px;font-size:29px;color:#030615;letter-spacing:0.95px;font-family:'Liberation Sans', sans-serif;font-weight:400;">0.08</div>
<div class="t" style="right:345.0px;top:1087.8px;font-size:29px;color:#030615;letter-spacing:1.25px;font-family:'Liberation Sans', sans-serif;font-weight:400;">&lt;$0.01</div>
<svg class="r" style="left:2348px;top:1090.3px" width="26" height="24" viewBox="0 0 26 24"><path d="M 13 22 L 13 3 M 4.5 11 L 13 2.5 L 21.5 11" stroke="#030615" stroke-width="2.8" fill="none"/></svg>
<div class="t" style="left:2393.0px;top:1087.8px;font-size:29px;color:#030615;letter-spacing:0.6px;font-family:'Liberation Sans', sans-serif;font-weight:400;">+47.0%</div>
<div class="r" style="left:476px;top:1226px;width:2138px;height:2px;background:#e4e6ea;"></div>
<svg class="r" style="left:522.6px;top:1172.6px" width="27" height="27" viewBox="0 0 27 27"><rect x="0" y="0" width="27" height="27" rx="4" fill="#4cb4d0"/><path d="M 3.8 13.8 L 10.2 19.9 L 22.6 6.8" stroke="#fff" stroke-width="3.1" fill="none"/></svg>
<svg class="r" style="left:567px;top:1173.0px" width="25" height="25" viewBox="0 0 25 25">
<rect x="1.25" y="1.25" width="22.5" height="22.5" rx="1" stroke="#030615" stroke-width="2.5" fill="none"/>
<line x1="1" y1="7.6" x2="24" y2="7.6" stroke="#030615" stroke-width="2.2"/>
<line x1="1" y1="15.6" x2="24" y2="15.6" stroke="#030615" stroke-width="2.2"/>
<line x1="8.8" y1="7" x2="8.8" y2="24" stroke="#030615" stroke-width="2.2"/>
<line x1="16.2" y1="7" x2="16.2" y2="24" stroke="#030615" stroke-width="2.2"/>
</svg>
<div class="t" style="left:612.5px;top:1171.8px;font-size:29px;color:#2e2a8f;letter-spacing:-0.18px;font-family:'Liberation Sans', sans-serif;font-weight:400;">CLEANED/users_cleaned</div>
<div class="t" style="left:1254.0px;top:1171.8px;font-size:29px;color:#030615;letter-spacing:0.85px;font-family:'Liberation Sans', sans-serif;font-weight:400;">data-eng-pipeline</div>
<div class="t" style="right:637.5px;top:1171.8px;font-size:29px;color:#030615;letter-spacing:0.95px;font-family:'Liberation Sans', sans-serif;font-weight:400;">0.07</div>
<div class="t" style="right:345.0px;top:1171.8px;font-size:29px;color:#030615;letter-spacing:1.25px;font-family:'Liberation Sans', sans-serif;font-weight:400;">&lt;$0.01</div>
<svg class="r" style="left:2348px;top:1174.3px" width="26" height="24" viewBox="0 0 26 24"><path d="M 13 22 L 13 3 M 4.5 11 L 13 2.5 L 21.5 11" stroke="#030615" stroke-width="2.8" fill="none"/></svg>
<div class="t" style="left:2393.0px;top:1171.8px;font-size:29px;color:#030615;letter-spacing:0.6px;font-family:'Liberation Sans', sans-serif;font-weight:400;">+34.1%</div>
<div class="r" style="left:476px;top:1346px;width:2138px;height:2px;background:#e4e6ea;"></div>
<svg class="r" style="left:522.6px;top:1256.6px" width="27" height="27" viewBox="0 0 27 27"><rect x="0" y="0" width="27" height="27" rx="4" fill="#9b75ee"/><path d="M 3.8 13.8 L 10.2 19.9 L 22.6 6.8" stroke="#fff" stroke-width="3.1" fill="none"/></svg>
<svg class="r" style="left:567px;top:1257.0px" width="25" height="25" viewBox="0 0 25 25">
<rect x="1.25" y="1.25" width="22.5" height="22.5" rx="1" stroke="#030615" stroke-width="2.5" fill="none"/>
<line x1="1" y1="7.6" x2="24" y2="7.6" stroke="#030615" stroke-width="2.2"/>
<line x1="1" y1="15.6" x2="24" y2="15.6" stroke="#030615" stroke-width="2.2"/>
<line x1="8.8" y1="7" x2="8.8" y2="24" stroke="#030615" stroke-width="2.2"/>
<line x1="16.2" y1="7" x2="16.2" y2="24" stroke="#030615" stroke-width="2.2"/>
</svg>
<div class="t" style="left:612.5px;top:1255.8px;font-size:29px;color:#2e2a8f;letter-spacing:-0.18px;font-family:'Liberation Sans', sans-serif;font-weight:400;">CLEANED/locations_cleaned</div>
<div class="t" style="left:1254.0px;top:1255.8px;font-size:29px;color:#030615;letter-spacing:0.85px;font-family:'Liberation Sans', sans-serif;font-weight:400;">data-eng-pipeline</div>
<div class="t" style="right:637.5px;top:1255.8px;font-size:29px;color:#030615;letter-spacing:0.95px;font-family:'Liberation Sans', sans-serif;font-weight:400;">0.01</div>
<div class="t" style="right:345.0px;top:1255.8px;font-size:29px;color:#030615;letter-spacing:1.25px;font-family:'Liberation Sans', sans-serif;font-weight:400;">&lt;$0.01</div>
<svg class="r" style="left:2345px;top:1252px" width="32" height="32" viewBox="0 0 32 32"><path d="M 11 5.800000000000001 Q 13.244 13.756 21.2 16 Q 13.244 18.244 11 26.2 Q 8.756 18.244 0.8000000000000007 16 Q 8.756 13.756 11 5.800000000000001 Z" fill="#030615"/><path d="M 24.3 1.2999999999999998 Q 25.444000000000003 5.356 29.5 6.5 Q 25.444000000000003 7.644 24.3 11.7 Q 23.156 7.644 19.1 6.5 Q 23.156 5.356 24.3 1.2999999999999998 Z" fill="#030615"/><path d="M 24.3 20.0 Q 25.444000000000003 24.055999999999997 29.5 25.2 Q 25.444000000000003 26.344 24.3 30.4 Q 23.156 26.344 19.1 25.2 Q 23.156 24.055999999999997 24.3 20.0 Z" fill="#030615"/></svg>
<div class="t" style="left:2393.0px;top:1255.8px;font-size:29px;color:#030615;letter-spacing:0.5px;font-family:'Liberation Sans', sans-serif;font-weight:400;">New this</div>
<div class="t" style="left:2393.0px;top:1291.8px;font-size:29px;color:#030615;letter-spacing:0.5px;font-family:'Liberation Sans', sans-serif;font-weight:400;">period</div>
<div class="r" style="left:476px;top:1430px;width:2138px;height:2px;background:#e4e6ea;"></div>
<svg class="r" style="left:522.6px;top:1376.6px" width="27" height="27" viewBox="0 0 27 27"><rect x="0" y="0" width="27" height="27" rx="4" fill="#6878e0"/><path d="M 3.8 13.8 L 10.2 19.9 L 22.6 6.8" stroke="#fff" stroke-width="3.1" fill="none"/></svg>
<svg class="r" style="left:567px;top:1377.0px" width="25" height="25" viewBox="0 0 25 25">
<rect x="1.25" y="1.25" width="22.5" height="22.5" rx="1" stroke="#030615" stroke-width="2.5" fill="none"/>
<line x1="1" y1="7.6" x2="24" y2="7.6" stroke="#030615" stroke-width="2.2"/>
<line x1="1" y1="15.6" x2="24" y2="15.6" stroke="#030615" stroke-width="2.2"/>
<line x1="8.8" y1="7" x2="8.8" y2="24" stroke="#030615" stroke-width="2.2"/>
<line x1="16.2" y1="7" x2="16.2" y2="24" stroke="#030615" stroke-width="2.2"/>
</svg>
<div class="t" style="left:612.5px;top:1375.8px;font-size:29px;color:#2e2a8f;letter-spacing:-0.18px;font-family:'Liberation Sans', sans-serif;font-weight:400;">ANALYTICS/weekly_order_summary</div>
<div class="t" style="left:1254.0px;top:1375.8px;font-size:29px;color:#030615;letter-spacing:0.85px;font-family:'Liberation Sans', sans-serif;font-weight:400;">data-eng-pipeline</div>
<div class="t" style="right:637.5px;top:1375.8px;font-size:29px;color:#030615;letter-spacing:0.95px;font-family:'Liberation Sans', sans-serif;font-weight:400;">&lt;0.01</div>
<div class="t" style="right:345.0px;top:1375.8px;font-size:29px;color:#030615;letter-spacing:1.25px;font-family:'Liberation Sans', sans-serif;font-weight:400;">&lt;$0.01</div>
<svg class="r" style="left:2348px;top:1378.3px" width="26" height="24" viewBox="0 0 26 24"><path d="M 13 2 L 13 21 M 4.5 13 L 13 21.5 L 21.5 13" stroke="#6b6f7b" stroke-width="2.8" fill="none"/></svg>
<div class="t" style="left:2393.0px;top:1375.8px;font-size:29px;color:#030615;letter-spacing:0.6px;font-family:'Liberation Sans', sans-serif;font-weight:400;">-57.5%</div>
<div class="r" style="left:476px;top:1514px;width:2138px;height:2px;background:#e4e6ea;"></div>
<svg class="r" style="left:522.6px;top:1460.6px" width="27" height="27" viewBox="0 0 27 27"><rect x="0" y="0" width="27" height="27" rx="4" fill="#ea4595"/><path d="M 3.8 13.8 L 10.2 19.9 L 22.6 6.8" stroke="#fff" stroke-width="3.1" fill="none"/></svg>
<svg class="r" style="left:567px;top:1461.0px" width="25" height="25" viewBox="0 0 25 25">
<rect x="1.25" y="1.25" width="22.5" height="22.5" rx="1" stroke="#030615" stroke-width="2.5" fill="none"/>
<line x1="1" y1="7.6" x2="24" y2="7.6" stroke="#030615" stroke-width="2.2"/>
<line x1="1" y1="15.6" x2="24" y2="15.6" stroke="#030615" stroke-width="2.2"/>
<line x1="8.8" y1="7" x2="8.8" y2="24" stroke="#030615" stroke-width="2.2"/>
<line x1="16.2" y1="7" x2="16.2" y2="24" stroke="#030615" stroke-width="2.2"/>
</svg>
<div class="t" style="left:612.5px;top:1459.8px;font-size:29px;color:#2e2a8f;letter-spacing:-0.18px;font-family:'Liberation Sans', sans-serif;font-weight:400;">ANALYTICS/order_stats</div>
<div class="t" style="left:1254.0px;top:1459.8px;font-size:29px;color:#030615;letter-spacing:0.85px;font-family:'Liberation Sans', sans-serif;font-weight:400;">data-eng-pipeline</div>
<div class="t" style="right:637.5px;top:1459.8px;font-size:29px;color:#030615;letter-spacing:0.95px;font-family:'Liberation Sans', sans-serif;font-weight:400;">&lt;0.01</div>
<div class="t" style="right:345.0px;top:1459.8px;font-size:29px;color:#030615;letter-spacing:1.25px;font-family:'Liberation Sans', sans-serif;font-weight:400;">&lt;$0.01</div>
<svg class="r" style="left:2348px;top:1462.3px" width="26" height="24" viewBox="0 0 26 24"><path d="M 13 2 L 13 21 M 4.5 13 L 13 21.5 L 21.5 13" stroke="#6b6f7b" stroke-width="2.8" fill="none"/></svg>
<div class="t" style="left:2393.0px;top:1459.8px;font-size:29px;color:#030615;letter-spacing:0.6px;font-family:'Liberation Sans', sans-serif;font-weight:400;">-58.6%</div>
<div class="r" style="left:2616px;top:1064px;width:24px;height:452px;background:#f9f9f9;"></div>
<div class="r" style="left:2622.5px;top:1114px;width:15px;height:220px;background:#c0c0c0;border-radius:7.5px;"></div>
<script>(function(){var w=window.innerWidth;if(w&&Math.abs(w-2640)>1){document.documentElement.style.zoom=(w/2640);}})();</script>
</body></html>
